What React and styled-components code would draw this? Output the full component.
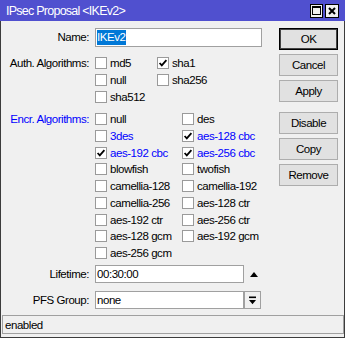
import React from 'react';
import styled, { createGlobalStyle } from 'styled-components';

const GlobalStyle = createGlobalStyle`
  html, body { margin: 0; padding: 0; background: #f0f0f0; }
  body { font-family: "Liberation Sans", Arial, sans-serif; }
`;

const Window = styled.div`
  width: 345px;
  height: 338px;
  display: flex;
  flex-direction: column;
  background: #f0f0f0;
  box-sizing: border-box;
  font-family: "Liberation Sans", Arial, sans-serif;
  font-size: 11.5px;
  letter-spacing: -0.45px;
  color: #000;
`;

const TitleBar = styled.div`
  height: 21px;
  flex: none;
  background: #5050cf;
  display: flex;
  align-items: center;
  justify-content: space-between;
  padding: 0 6px 0 6px;
  box-sizing: border-box;
`;

const Title = styled.span`
  color: #fff;
  font-size: 12.5px;
  letter-spacing: -0.75px;
`;

const TitleButtons = styled.div`
  display: flex;
  gap: 2px;
`;

const TitleButton = styled.div`
  width: ${p => p.$w}px;
  height: 14px;
  box-sizing: border-box;
  border: 1px solid #000;
  background: #f0f0f0;
  display: flex;
  align-items: center;
  justify-content: center;
`;

const Frame = styled.div`
  flex: 1;
  display: flex;
  flex-direction: column;
  border: 1px solid #3c3c3c;
  border-top: none;
  min-height: 0;
`;

const Body = styled.div`
  flex: 1;
  display: grid;
  grid-template-columns: 1fr 59px;
  align-items: start;
  padding: 7px 6px 0 0;
`;

const Form = styled.div`
  display: flex;
  flex-direction: column;
`;

const FieldRow = styled.div`
  display: grid;
  grid-template-columns: 88px auto auto;
  column-gap: 6px;
  align-items: ${p => (p.$top ? 'start' : 'center')};
  justify-content: start;
  margin-top: ${p => p.$mt || 0}px;
`;

const Label = styled.div`
  text-align: right;
  color: ${p => (p.$blue ? '#0000ff' : '#000')};
  line-height: 16.7px;
  white-space: nowrap;
`;

const CheckGrid = styled.div`
  display: grid;
  grid-template-columns: ${p => p.$cols};
  grid-auto-rows: 16.7px;
`;

const CheckItem = styled.div`
  display: flex;
  align-items: center;
  gap: 3px;
  white-space: nowrap;
  color: ${p => (p.$blue ? '#0000ff' : '#000')};
`;

const Box = styled.span`
  width: 12px;
  height: 12px;
  box-sizing: border-box;
  border: 1px solid #9a9a9a;
  background: #fff;
  display: flex;
  align-items: center;
  justify-content: center;
  flex: none;
`;

const TextBox = styled.div`
  width: ${p => p.$w}px;
  height: ${p => p.$h}px;
  box-sizing: border-box;
  border: 1px solid #a0a0a0;
  background: #fff;
  padding: 0 1px;
  display: flex;
  align-items: center;
  white-space: nowrap;
`;

const Selected = styled.span`
  background: #0078d7;
  color: #fff;
  line-height: 15px;
  padding: 0 1px 0 0;
`;

const UpArrow = styled.span`
  width: 0;
  height: 0;
  border-left: 4px solid transparent;
  border-right: 4px solid transparent;
  border-bottom: 5px solid #000;
`;

const Combo = styled.div`
  display: flex;
`;

const DropButton = styled.div`
  width: 17px;
  height: 18px;
  box-sizing: border-box;
  border: 1px solid #a0a0a0;
  background: #f0f0f0;
  display: flex;
  align-items: center;
  justify-content: center;
`;

const ButtonColumn = styled.div`
  display: flex;
  flex-direction: column;
  gap: 4px;
`;

const Button = styled.div`
  height: 22px;
  box-sizing: border-box;
  border: 1px solid ${p => (p.$default ? '#000' : '#adadad')};
  box-shadow: ${p => (p.$default ? 'inset 0 0 0 1px #444' : 'none')};
  background: #e1e1e1;
  display: flex;
  align-items: center;
  justify-content: center;
  margin-top: ${p => p.$mt || 0}px;
`;

const StatusBar = styled.div`
  height: 19px;
  box-sizing: border-box;
  border: 1px solid #a0a0a0;
  margin: 0 0 3px 1px;
  padding-left: 2px;
  display: flex;
  align-items: center;
`;

const Check = ({ checked }) => (
  <Box>
    {checked && (
      <svg width="10" height="10" viewBox="0 0 10 10">
        <path d="M1.6 5 L3.8 7.4 L8.4 2.2" fill="none" stroke="#000" strokeWidth="1.8" />
      </svg>
    )}
  </Box>
);

const Item = ({ label, checked, blue }) => (
  <CheckItem $blue={blue}>
    <Check checked={checked} />
    <span>{label}</span>
  </CheckItem>
);

const auth = [
  ['md5', false], ['sha1', true],
  ['null', false], ['sha256', false],
  ['sha512', false],
];

const encr = [
  ['null'], ['des'],
  ['3des', false, true], ['aes-128 cbc', true, true],
  ['aes-192 cbc', true, true], ['aes-256 cbc', true, true],
  ['blowfish'], ['twofish'],
  ['camellia-128'], ['camellia-192'],
  ['camellia-256'], ['aes-128 ctr'],
  ['aes-192 ctr'], ['aes-256 ctr'],
  ['aes-128 gcm'], ['aes-192 gcm'],
  ['aes-256 gcm'],
];

export default function App() {
  return (
    <>
      <GlobalStyle />
      <Window>
        <TitleBar>
          <Title>IPsec Proposal &lt;IKEv2&gt;</Title>
          <TitleButtons>
            <TitleButton $w={13}>
              <svg width="9" height="9" viewBox="0 0 9 9">
                <rect x="0.5" y="0.5" width="8" height="8" fill="none" stroke="#000" strokeWidth="1" />
                <rect x="0" y="0" width="9" height="2" fill="#000" />
              </svg>
            </TitleButton>
            <TitleButton $w={14}>
              <svg width="8" height="8" viewBox="0 0 8 8">
                <path d="M1 1 L7 7 M7 1 L1 7" stroke="#000" strokeWidth="2" />
              </svg>
            </TitleButton>
          </TitleButtons>
        </TitleBar>
        <Frame>
          <Body>
            <Form>
              <FieldRow>
                <Label>Name:</Label>
                <TextBox $w={167} $h={19}>
                  <Selected>IKEv2</Selected>
                </TextBox>
              </FieldRow>
              <FieldRow $top $mt={8}>
                <Label>Auth. Algorithms:</Label>
                <CheckGrid $cols="62px auto">
                  {auth.map(([l, c]) => (
                    <Item key={l} label={l} checked={c} />
                  ))}
                </CheckGrid>
              </FieldRow>
              <FieldRow $top $mt={6}>
                <Label $blue>Encr. Algorithms:</Label>
                <CheckGrid $cols="87px auto">
                  {encr.map(([l, c, b]) => (
                    <Item key={l} label={l} checked={c} blue={b} />
                  ))}
                </CheckGrid>
              </FieldRow>
              <FieldRow $mt={4}>
                <Label>Lifetime:</Label>
                <TextBox $w={149} $h={18}>00:30:00</TextBox>
                <UpArrow />
              </FieldRow>
              <FieldRow $mt={8}>
                <Label>PFS Group:</Label>
                <Combo>
                  <TextBox $w={149} $h={18}>none</TextBox>
                  <DropButton>
                    <svg width="9" height="9" viewBox="0 0 9 9">
                      <rect x="1" y="0.5" width="7" height="1.6" fill="#000" />
                      <polygon points="1,4 8,4 4.5,8.2" fill="#000" />
                    </svg>
                  </DropButton>
                </Combo>
              </FieldRow>
            </Form>
            <ButtonColumn>
              <Button $default>OK</Button>
              <Button>Cancel</Button>
              <Button>Apply</Button>
              <Button $mt={6}>Disable</Button>
              <Button>Copy</Button>
              <Button>Remove</Button>
            </ButtonColumn>
          </Body>
          <StatusBar>enabled</StatusBar>
        </Frame>
      </Window>
    </>
  );
}
